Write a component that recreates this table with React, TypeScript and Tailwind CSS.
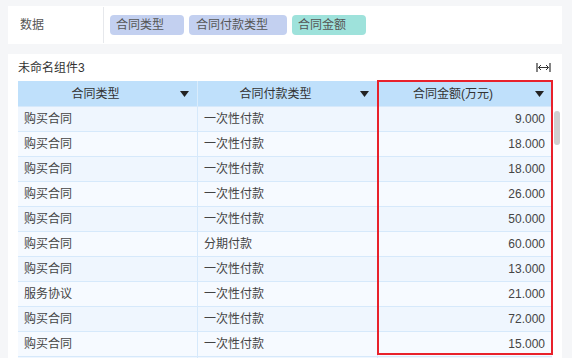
import React from "react";

const rows: [string, string, string][] = [
  ["购买合同", "一次性付款", "9.000"],
  ["购买合同", "一次性付款", "18.000"],
  ["购买合同", "一次性付款", "18.000"],
  ["购买合同", "一次性付款", "26.000"],
  ["购买合同", "一次性付款", "50.000"],
  ["购买合同", "分期付款", "60.000"],
  ["购买合同", "一次性付款", "13.000"],
  ["服务协议", "一次性付款", "21.000"],
  ["购买合同", "一次性付款", "72.000"],
  ["购买合同", "一次性付款", "15.000"],
  ["", "", ""],
];

const font = { fontFamily: '"Liberation Sans", "Noto Sans CJK SC", sans-serif' };

function Tri() {
  return (
    <svg width="9" height="6" viewBox="0 0 9 6" className="block">
      <path d="M0 0 H9 L4.5 6 Z" fill="#222" />
    </svg>
  );
}

function HeaderCell({ label, last }: { label: string; last?: boolean }) {
  return (
    <div
      className={
        "flex h-[25px] items-center bg-[#bfe0fb] text-[12px] text-[#333] " +
        (last ? "" : "border-r border-[#d9ecfc]")
      }
    >
      <div className="flex-1 text-center">{label}</div>
      <div className="flex w-[24px] justify-start pl-[7px]">
        <Tri />
      </div>
    </div>
  );
}

export default function App() {
  return (
    <div
      className="relative h-[358px] w-[572px] overflow-hidden bg-[#f5f6f8] pl-[8px] pr-[10px] pt-[6px]"
      style={font}
    >
      <div className="flex h-[38px] items-center bg-white">
        <div className="flex h-full w-[95px] items-center pl-[12px] text-[12px] text-[#555]">数据</div>
        <div className="h-[36px] w-px bg-[#e6e8ec]" />
        <div className="flex items-center gap-[5px] pl-[6px]">
          <div className="flex h-[20px] w-[74px] items-center rounded-[4px] bg-[#c3d0f0] pl-[6px] text-[12px] text-[#555]">
            合同类型
          </div>
          <div className="flex h-[20px] w-[98px] items-center rounded-[4px] bg-[#c3d0f0] pl-[7px] text-[12px] text-[#555]">
            合同付款类型
          </div>
          <div className="flex h-[20px] w-[74px] items-center rounded-[4px] bg-[#9ee2db] pl-[6px] text-[12px] text-[#555]">
            合同金额
          </div>
        </div>
      </div>

      <div className="mt-[10px] bg-white px-[10px]">
        <div className="flex h-[27px] items-center justify-between">
          <div className="text-[12px] text-[#333]">未命名组件3</div>
          <svg width="15" height="11" viewBox="0 0 15 11" className="mr-[1px]">
            <path d="M1 1 V10 M14 1 V10" stroke="#333" strokeWidth="1.2" />
            <path d="M2.5 5.5 H12.5" stroke="#333" strokeWidth="1" />
            <path d="M5 3 L2.5 5.5 L5 8 M10 3 L12.5 5.5 L10 8" stroke="#333" strokeWidth="1" fill="none" />
          </svg>
        </div>
        <div className="grid grid-cols-[180px_180px_174px]">
          <HeaderCell label="合同类型" />
          <HeaderCell label="合同付款类型" />
          <HeaderCell label="合同金额(万元)" last />
          {rows.map((r, i) => {
            const bg = i % 2 === 0 ? "bg-[#eff6fe]" : "bg-[#f6faff]";
            return (
              <React.Fragment key={i}>
                <div className={"flex h-[25px] items-center border-r border-t border-[#d6e9fb] pl-[6px] text-[12px] text-[#444] " + bg}>
                  {r[0]}
                </div>
                <div className={"flex h-[25px] items-center border-r border-t border-[#d6e9fb] pl-[6px] text-[12px] text-[#444] " + bg}>
                  {r[1]}
                </div>
                <div className={"flex h-[25px] items-center justify-end border-t border-[#d6e9fb] pr-[7px] text-[12px] text-[#444] " + bg}>
                  {r[2]}
                </div>
              </React.Fragment>
            );
          })}
        </div>
      </div>

      <div className="absolute left-[554px] top-[111px] h-[34px] w-[6px] rounded-full bg-[#cfcfcf]" />
      <div className="absolute left-[377px] top-[80px] h-[275px] w-[176px] border-2 border-[#e8212b]" />
    </div>
  );
}
